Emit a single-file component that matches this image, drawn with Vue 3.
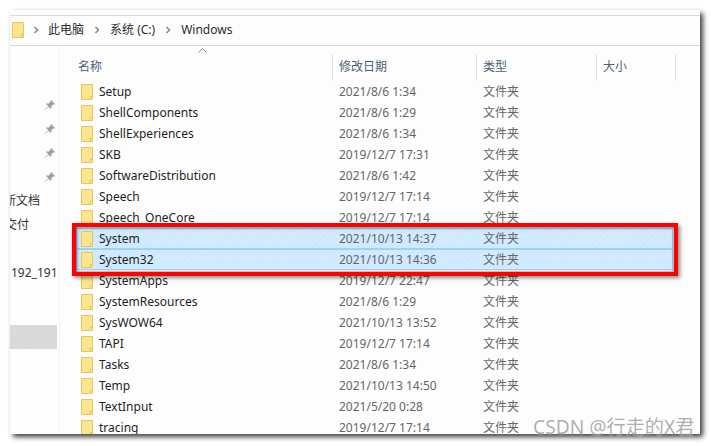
<script setup>
const names = [
  ['Setup', '2021/8/6 1:34'],
  ['ShellComponents', '2021/8/6 1:29'],
  ['ShellExperiences', '2021/8/6 1:34'],
  ['SKB', '2019/12/7 17:31'],
  ['SoftwareDistribution', '2021/8/6 1:42'],
  ['Speech', '2019/12/7 17:14'],
  ['Speech_OneCore', '2019/12/7 17:14'],
  ['System', '2021/10/13 14:37', true],
  ['System32', '2021/10/13 14:36', true],
  ['SystemApps', '2019/12/7 22:47'],
  ['SystemResources', '2021/8/6 1:29'],
  ['SysWOW64', '2021/10/13 13:52'],
  ['TAPI', '2019/12/7 17:14'],
  ['Tasks', '2021/8/6 1:34'],
  ['Temp', '2021/10/13 14:50'],
  ['TextInput', '2021/5/20 0:28'],
  ['tracing', '2019/12/7 17:14']
]
const crumbs = ['此电脑', '系统 (C:)', 'Windows']
</script>

<template>
  <div class="page">
    <div class="window">
      <div class="address">
        <svg class="folder big" viewBox="0 0 12 16"><path d="M.5.5h11v15H.5z" fill="#fde48f" stroke="#eac657"/><path d="M9 15.500v-3h2.500" fill="none" stroke="#eac657"/></svg>
        <template v-for="c in crumbs" :key="c">
          <svg class="chev" viewBox="0 0 6 8"><path d="M1.500 1l3 3-3 3" fill="none" stroke="#8a8a8a" stroke-width="1.600"/></svg>
          <span class="crumb">{{ c }}</span>
        </template>
      </div>
      <div class="content">
        <aside class="side">
          <svg v-for="n in 4" :key="n" class="pin" viewBox="0 0 12 12"><path d="M7 1l4 4-1 .7-.8-.3L7.300 7.300l.3 2-.8.7-2.300-2.300L1.500 11 1 10.500l3.300-3.200L2 5l.7-.8 2 .3 1.900-1.900-.3-.8z" fill="#98a0a8"/></svg>
          <div class="item first">新文档</div>
          <div class="item second">交付</div>
          <div class="item"></div>
          <div class="item">192_191</div>
          <div class="active"></div>
        </aside>
        <main class="main">
          <svg class="sort" viewBox="0 0 9 5"><path d="M.5 4.500l4-4 4 4" fill="none" stroke="#8d8d8d"/></svg>
          <div class="head">
            <div class="hname">名称</div>
            <div class="hcol">修改日期</div>
            <div class="hcol">类型</div>
            <div class="hcol hlast">大小</div>
          </div>
          <div v-for="r in names" :key="r[0]" class="row" :class="{ sel: r[2] }">
            <div class="name">
              <svg class="folder" viewBox="0 0 12 16"><path d="M.5.500h11v15H.5z" fill="#fde48f" stroke="#eac657"/><path d="M9 15.500v-3h2.500" fill="none" stroke="#eac657"/></svg>
              <span>{{ r[0] }}</span>
            </div>
            <div class="cell">{{ r[1] }}</div>
            <div class="cell">文件夹</div>
          </div>
        </main>
      </div>
      <div class="mark"></div>
    </div>
    <div class="wm">CSDN @行走的X君</div>
  </div>
</template>

<style scoped>
.page {
  position: relative;
  box-sizing: border-box;
  width: 711px;
  height: 446px;
  padding: 10px 11px 12px 10px;
  background: #fff;
  overflow: hidden;
  font-family: "Noto Sans", "Noto Sans CJK SC", sans-serif;
  font-size: 12px;
}
.window {
  position: relative;
  height: 100%;
  background: #fdfdfd;
  overflow: hidden;
  box-shadow: 3px 3px 5px rgba(0, 0, 0, 0.75);
  padding-top: 5px;
  box-sizing: border-box;
}
.address {
  display: flex;
  align-items: center;
  height: 31px;
  box-sizing: border-box;
  border-top: 1px solid #d9d9d9;
  border-bottom: 1px solid #d9d9d9;
  padding: 0 0 2px 2px;
  color: #2b2b2b;
}
.folder { width: 12px; height: 16px; flex: none; display: block; }
.chev { width: 6px; height: 8px; margin: 0 10px 0 9px; flex: none; }
.crumb { white-space: nowrap; line-height: 16px; }
.crumb:nth-of-type(n) { margin-right: 1px; }
.folder.big + .chev { margin-right: 9px; }
.content { display: flex; height: 388px; }
.side {
  width: 49px;
  border-right: 1px solid #f3f3f3;
  padding-top: 47px;
  display: flex;
  flex-direction: column;
  flex: none;
  overflow: hidden;
  color: #333;
}
.pin { width: 12px; height: 12px; flex: none; margin: 6px 0 6px 34px; display: block; }
.item { height: 24px; line-height: 24px; white-space: nowrap; flex: none; padding-left: 1px; }
.item.first { padding-left: 0; margin-left: -6px; }
.item.second { padding-left: 0; margin-left: -5px; }
.active {
  height: 24px;
  width: 47px;
  margin-top: 40px;
  flex: none;
  background: repeating-linear-gradient(135deg, #d6d6d6 0 1px, #dcdcdc 1px 2px);
}
.main { position: relative; flex: 1; padding: 8px 0 0 16px; }
.sort { position: absolute; left: 138px; top: 2px; width: 9px; height: 5px; }
.head {
  display: grid;
  grid-template-columns: 256px 144px 120px 80px;
  height: 27px;
  width: 600px;
  color: #4c607a;
  line-height: 25px;
}
.hname { padding-left: 2px; }
.hcol { border-left: 1px solid #e2e2e2; padding-left: 6px; }
.hlast { border-right: 1px solid #e2e2e2; box-sizing: border-box; }
.row {
  display: grid;
  grid-template-columns: 256px 144px 120px;
  width: 597px;
  height: 21px;
  box-sizing: border-box;
  line-height: 21px;
  align-items: center;
  color: #1e1e1e;
}
.row.sel {
  background: repeating-linear-gradient(135deg, #cde8ff 0 2px, #d2ebff 2px 4px);
  box-shadow: inset 0 0 0 1px #99d1ff;
}
.name { display: flex; align-items: center; gap: 6px; padding-left: 5px; white-space: nowrap; }
.cell { padding-left: 7px; color: #666; white-space: nowrap; }
.mark {
  position: absolute;
  left: 62px;
  top: 213px;
  width: 606px;
  height: 53px;
  box-sizing: border-box;
  border: 4px solid #f00;
  box-shadow: 2px 2px 4px rgba(0, 0, 0, 0.45), inset 1px 1px 3px rgba(0, 0, 0, 0.5), inset -1px -1px 2px rgba(0, 0, 0, 0.25);
}
.wm {
  position: absolute;
  left: 533px;
  top: 414px;
  font-size: 19.200px;
  line-height: 26px;
  color: rgba(120, 120, 120, 0.6);
  text-shadow: 0 0 2px rgba(255, 255, 255, 0.8);
  white-space: nowrap;
}
</style>
